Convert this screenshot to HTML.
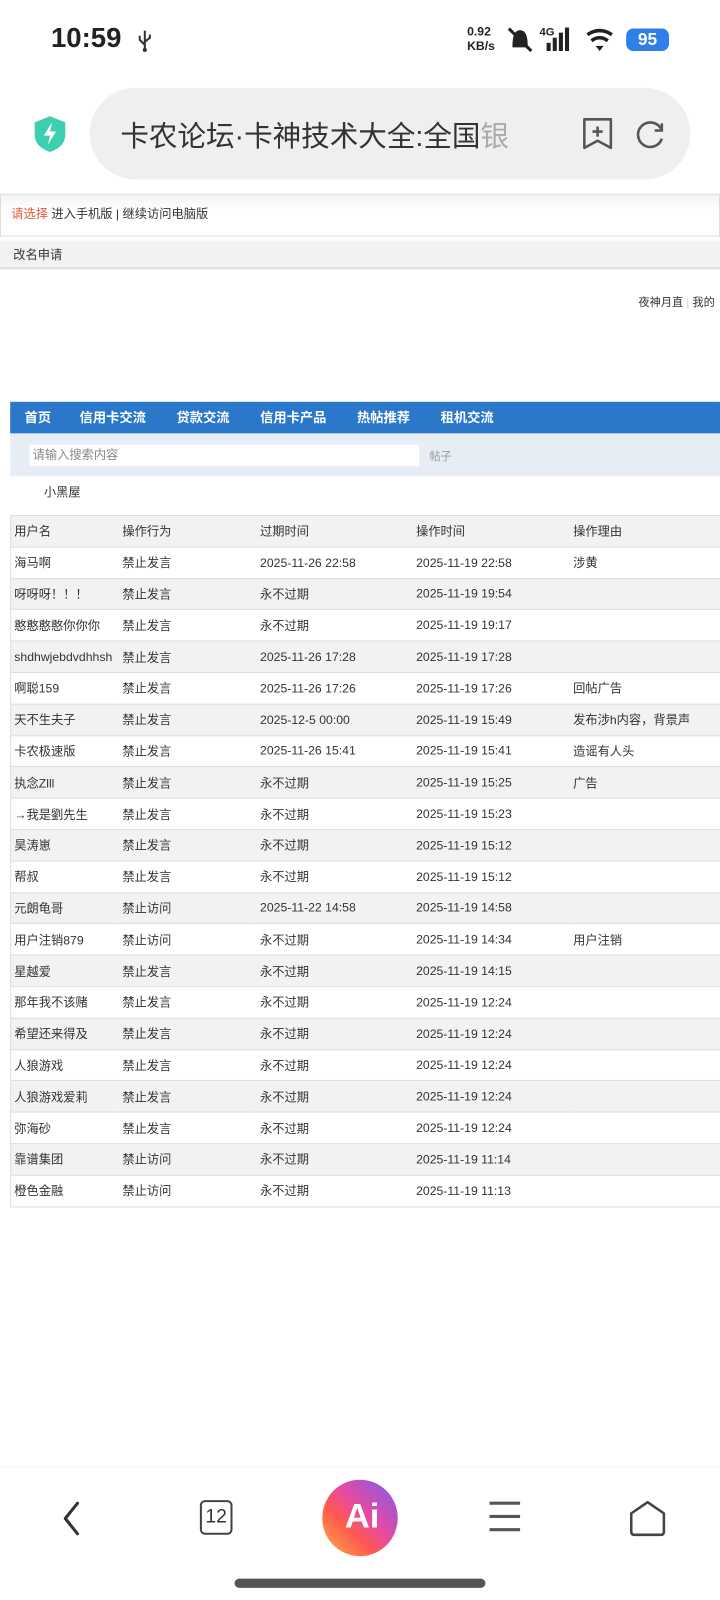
<!DOCTYPE html>
<html><head><meta charset="utf-8"><style>
*{margin:0;padding:0;box-sizing:border-box}
body{width:720px;height:1600px;background:#fff;font-family:"Liberation Sans","Noto Sans CJK SC",sans-serif;overflow:hidden;color:#333}
#w{position:absolute;left:0;top:0;width:706px;height:1569px;transform:scale(1.0198);transform-origin:0 0}
.abs{position:absolute}
table{border-collapse:collapse;position:absolute;left:10px;top:505px;width:696px;font-size:12px;color:#333}
td{height:30.8px;border-top:1px solid #ddd;padding-left:4px;white-space:nowrap;vertical-align:middle}
tr.g td{background:#f2f2f2}
</style></head><body><div id="w">
<div class="abs" style="left:50px;top:22px;font-size:27px;font-weight:bold;color:#222">10:59</div>
<svg class="abs" style="left:134px;top:28px" width="16" height="24"><path d="M8 2 V22 M8 16 L3 11 V7 M8 13 L13 9 V6" stroke="#333" stroke-width="2" fill="none"/><circle cx="8" cy="21" r="2" fill="#333"/></svg>
<div class="abs" style="left:458px;top:24px;font-size:12px;font-weight:bold;line-height:14px;color:#222">0.92<br>KB/s</div>
<svg class="abs" style="left:496px;top:24px" width="112" height="30"><g stroke="#222" stroke-width="3" fill="none"><path d="M3 4 L25 26"/><path d="M8 21 Q8 7 14 7 Q20 7 20 21 Z" fill="#222"/></g><text x="33" y="11" font-size="11" font-weight="bold" fill="#222" font-family="Liberation Sans">4G</text><rect x="40" y="18" width="4" height="8" fill="#222"/><rect x="46" y="13" width="4" height="13" fill="#222"/><rect x="52" y="8" width="4" height="18" fill="#222"/><rect x="58" y="3" width="4" height="23" fill="#222"/><path d="M80 10 Q92 2 104 10 M84 16 Q92 10 100 16" stroke="#222" stroke-width="3.5" fill="none"/><path d="M88 21 L92 26 L96 21 Z" fill="#222"/></svg>
<div class="abs" style="left:614px;top:28px;width:42px;height:22px;background:#2f7fe8;border-radius:7px;color:#fff;font-weight:bold;font-size:17px;text-align:center;line-height:22px">95</div>
<svg class="abs" style="left:32px;top:112px" width="34" height="38"><path d="M17 2 L32 8 L32 20 Q32 32 17 37 Q2 32 2 20 L2 8 Z" fill="#3ccfb0"/><path d="M19 8 L11 21 L17 21 L15 30 L23 17 L17 17 Z" fill="#fff"/></svg>
<div class="abs" style="left:88px;top:86px;width:589px;height:90px;background:#efefef;border-radius:45px"></div>
<div class="abs" style="left:118px;top:112px;font-size:28px;color:#333;white-space:nowrap;width:418px;overflow:hidden">卡农论坛·卡神技术大全:全国<span style="color:#aaa">银</span></div>
<svg class="abs" style="left:570px;top:114px" width="32" height="34"><path d="M3 3 H29 V31 L16 24 L3 31 Z" fill="none" stroke="#555" stroke-width="2.5" stroke-linejoin="round"/><path d="M16 10 V20 M11 15 H21" stroke="#555" stroke-width="2.5"/></svg>
<svg class="abs" style="left:622px;top:116px" width="32" height="32"><path d="M26 10 A12 12 0 1 0 27 20" fill="none" stroke="#555" stroke-width="2.5"/><path d="M20 12 L27 12 L27 5" fill="none" stroke="#555" stroke-width="2.5"/></svg>
<div class="abs" style="left:0;top:190px;width:706px;height:42px;border:1px solid #ddd;background:linear-gradient(#f4f4f4,#fff 40%);font-size:12px;line-height:38px;padding-left:10px"><span style="color:#e8593c">请选择</span> 进入手机版 | 继续访问电脑版</div>
<div class="abs" style="left:0;top:236px;width:706px;height:28px;background:#f2f2f2;border-bottom:2px solid #e0e0e0;font-size:12px;line-height:28px;padding-left:13px">改名申请</div>
<div class="abs" style="left:626px;top:288px;font-size:11px;color:#333;white-space:nowrap">夜神月直 <span style="color:#ccc">|</span> 我的</div>
<div class="abs" style="left:10px;top:394px;width:696px;height:31px;background:#2b78cb;color:#fff;font-size:13px;font-weight:bold;line-height:31px;white-space:nowrap"><span style="margin-left:14px">首页</span><span style="margin-left:28px">信用卡交流</span><span style="margin-left:30px">贷款交流</span><span style="margin-left:30px">信用卡产品</span><span style="margin-left:30px">热帖推荐</span><span style="margin-left:30px">租机交流</span></div>
<div class="abs" style="left:10px;top:425px;width:696px;height:42px;background:#e6edf5"></div>
<div class="abs" style="left:29px;top:436px;width:382px;height:21px;background:#fff;font-size:12px;color:#888;line-height:21px;padding-left:3px">请输入搜索内容</div>
<div class="abs" style="left:421px;top:439px;font-size:11px;color:#999">帖子</div>
<div class="abs" style="left:43px;top:474px;font-size:12px">小黑屋</div>
<table>
<colgroup><col style="width:106px"><col style="width:135px"><col style="width:153px"><col style="width:154px"><col></colgroup>
<tr class="g"><td>用户名</td><td>操作行为</td><td>过期时间</td><td>操作时间</td><td>操作理由</td></tr>
<tr><td>海马啊</td><td>禁止发言</td><td>2025-11-26 22:58</td><td>2025-11-19 22:58</td><td>涉黄</td></tr>
<tr class="g"><td>呀呀呀！！！</td><td>禁止发言</td><td>永不过期</td><td>2025-11-19 19:54</td><td></td></tr>
<tr><td>憨憨憨憨你你你</td><td>禁止发言</td><td>永不过期</td><td>2025-11-19 19:17</td><td></td></tr>
<tr class="g"><td>shdhwjebdvdhhsh</td><td>禁止发言</td><td>2025-11-26 17:28</td><td>2025-11-19 17:28</td><td></td></tr>
<tr><td>啊聪159</td><td>禁止发言</td><td>2025-11-26 17:26</td><td>2025-11-19 17:26</td><td>回帖广告</td></tr>
<tr class="g"><td>天不生夫子</td><td>禁止发言</td><td>2025-12-5 00:00</td><td>2025-11-19 15:49</td><td>发布涉h内容，背景声</td></tr>
<tr><td>卡农极速版</td><td>禁止发言</td><td>2025-11-26 15:41</td><td>2025-11-19 15:41</td><td>造谣有人头</td></tr>
<tr class="g"><td>执念Zlll</td><td>禁止发言</td><td>永不过期</td><td>2025-11-19 15:25</td><td>广告</td></tr>
<tr><td>→我是劉先生</td><td>禁止发言</td><td>永不过期</td><td>2025-11-19 15:23</td><td></td></tr>
<tr class="g"><td>昊涛崽</td><td>禁止发言</td><td>永不过期</td><td>2025-11-19 15:12</td><td></td></tr>
<tr><td>帮叔</td><td>禁止发言</td><td>永不过期</td><td>2025-11-19 15:12</td><td></td></tr>
<tr class="g"><td>元朗龟哥</td><td>禁止访问</td><td>2025-11-22 14:58</td><td>2025-11-19 14:58</td><td></td></tr>
<tr><td>用户注销879</td><td>禁止访问</td><td>永不过期</td><td>2025-11-19 14:34</td><td>用户注销</td></tr>
<tr class="g"><td>星越爱</td><td>禁止发言</td><td>永不过期</td><td>2025-11-19 14:15</td><td></td></tr>
<tr><td>那年我不该赌</td><td>禁止发言</td><td>永不过期</td><td>2025-11-19 12:24</td><td></td></tr>
<tr class="g"><td>希望还来得及</td><td>禁止发言</td><td>永不过期</td><td>2025-11-19 12:24</td><td></td></tr>
<tr><td>人狼游戏</td><td>禁止发言</td><td>永不过期</td><td>2025-11-19 12:24</td><td></td></tr>
<tr class="g"><td>人狼游戏爱莉</td><td>禁止发言</td><td>永不过期</td><td>2025-11-19 12:24</td><td></td></tr>
<tr><td>弥海砂</td><td>禁止发言</td><td>永不过期</td><td>2025-11-19 12:24</td><td></td></tr>
<tr class="g"><td>靠谱集团</td><td>禁止访问</td><td>永不过期</td><td>2025-11-19 11:14</td><td></td></tr>
<tr><td style="border-bottom:1px solid #ddd">橙色金融</td><td style="border-bottom:1px solid #ddd">禁止访问</td><td style="border-bottom:1px solid #ddd">永不过期</td><td style="border-bottom:1px solid #ddd">2025-11-19 11:13</td><td style="border-bottom:1px solid #ddd"></td></tr>
</table>
<div class="abs" style="left:10px;top:505px;width:1px;height:679px;background:#ddd"></div>
<div class="abs" style="left:0;top:1438px;width:706px;height:1px;background:#f0f0f0"></div>
<svg class="abs" style="left:56px;top:1470px" width="30" height="40"><path d="M20 4 L8 19 L20 34" fill="none" stroke="#333" stroke-width="3" stroke-linecap="round" stroke-linejoin="round"/></svg>
<div class="abs" style="left:196px;top:1471px;width:32px;height:34px;border:2.5px solid #444;border-radius:5px;font-size:19px;text-align:center;line-height:29px;color:#333">12</div>
<div class="abs" style="left:316px;top:1451px;width:74px;height:75px;border-radius:50%;background:linear-gradient(225deg,#7b5cf5 0%,#e94a9c 45%,#ff5a50 65%,#ffb340 100%)"></div>
<div class="abs" style="left:338px;top:1468px;font-size:34px;font-weight:bold;color:#fff">Ai</div>
<svg class="abs" style="left:478px;top:1470px" width="34" height="36"><path d="M2 4 H32 M2 17 H32 M2 30 H32" stroke="#555" stroke-width="3"/></svg>
<svg class="abs" style="left:616px;top:1470px" width="38" height="38"><path d="M3 14 L19 3 L35 14 V32 Q35 35 32 35 H6 Q3 35 3 32 Z" fill="none" stroke="#444" stroke-width="2.5" stroke-linejoin="round"/></svg>
<div class="abs" style="left:230px;top:1548px;width:246px;height:9px;border-radius:5px;background:#555"></div>
</div></body></html>
